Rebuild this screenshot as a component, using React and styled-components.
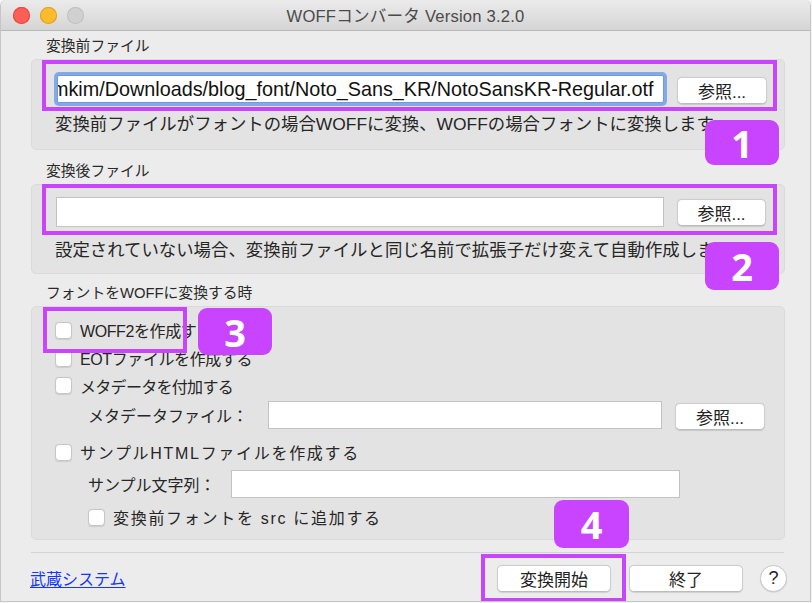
import React from 'react';
import styled, { createGlobalStyle } from 'styled-components';

const GlobalStyle = createGlobalStyle`
  html, body {
    margin: 0;
    padding: 0;
    background: #f6f6f6;
  }
  body {
    font-family: "Liberation Sans", "Noto Sans CJK JP", sans-serif;
    color: #262626;
  }
`

const ACCENT = '#c944ff'

export const WindowCss = styled.div`
  position: relative;
  width: 809px;
  height: 601px;
  background: #ececec;
  border: 1px solid #c6c6c6;
  border-top: none;
  border-radius: 6px 6px 0 0;
  overflow: hidden;
  display: flex;
  flex-direction: column;
`

export const TitleBarCss = styled.div`
  height: 30px;
  flex: none;
  display: grid;
  grid-template-columns: 1fr auto 1fr;
  align-items: center;
  background: linear-gradient(#ebebeb, #d5d5d5);
  border-bottom: 1px solid #b8b8b8;
`

export const LightsCss = styled.div`
  display: flex;
  gap: 10px;
  padding-left: 12px;
`

export const LightCss = styled.span`
  width: 17px;
  height: 17px;
  border-radius: 50%;
  background: ${p => p.color};
  box-shadow: inset 0 0 0 1px ${p => p.edge};
`

export const TitleCss = styled.div`
  font-size: 16.6px;
  color: #4b4b4b;
  letter-spacing: 0.2px;
`

export const BodyCss = styled.div`
  flex: 1;
  display: flex;
  flex-direction: column;
  padding: 0 25px 0 30px;
`

export const SectionLabelCss = styled.div`
  height: 26px;
  line-height: 26px;
  padding-left: 15px;
  font-size: 14.8px;
  color: #2a2a2a;
  margin-top: ${p => p.top || 0}px;
`

export const GroupCss = styled.div`
  background: #e3e3e3;
  border: 1px solid #dadada;
  border-radius: 5px;
  display: flex;
  flex-direction: column;
  padding: ${p => p.pad};
  height: ${p => p.h}px;
  box-sizing: border-box;
`

export const FileRowCss = styled.div`
  display: flex;
  align-items: center;
  height: ${p => p.h}px;
  margin-top: ${p => p.top || 0}px;
  padding-left: ${p => p.left}px;
  gap: 13px;
`

export const FieldCss = styled.div`
  width: ${p => p.w}px;
  height: ${p => p.h || 28}px;
  flex: none;
  box-sizing: border-box;
  background: #fff;
  border: 1px solid ${p => (p.focus ? '#6f9ae0' : '#c3c3c3')};
  box-shadow: ${p => (p.focus ? '0 0 0 3px #82aae8' : 'none')};
  border-radius: ${p => (p.focus ? '2px' : '0')};
  overflow: hidden;
  white-space: nowrap;
  font-size: 19.8px;
  line-height: 26px;
  color: #111;
`

export const FieldTextCss = styled.span`
  display: inline-block;
  margin-left: -6px;
`

export const ButtonCss = styled.button`
  width: ${p => p.w || 90}px;
  height: 27px;
  flex: none;
  margin-top: ${p => p.dy || 0}px;
  background: #fff;
  border: 1px solid #cdcdcd;
  border-bottom-color: #bcbcbc;
  border-radius: 5px;
  box-shadow: 0 0.5px 1px rgba(0, 0, 0, 0.12);
  font-family: "Liberation Sans", "Noto Sans CJK JP", sans-serif;
  font-size: 17px;
  color: #222;
  padding: 0;
  display: flex;
  align-items: center;
  justify-content: center;
`

export const NoteCss = styled.div`
  height: 22px;
  line-height: 22px;
  margin-top: ${p => p.top}px;
  padding-left: 23px;
  font-size: 17.4px;
  white-space: nowrap;
  overflow: hidden;
  color: #262626;
`

export const OptionRowCss = styled.div`
  display: flex;
  align-items: center;
  height: ${p => p.h || 28}px;
  margin-top: ${p => p.top || 0}px;
  padding-left: ${p => p.left || 23}px;
  font-size: 16px;
  letter-spacing: ${p => p.spacing || 0}px;
  white-space: nowrap;
`

export const CheckCss = styled.span`
  width: 17px;
  height: 17px;
  flex: none;
  box-sizing: border-box;
  background: #fff;
  border: 1px solid #c6c6c6;
  border-radius: 4px;
  box-shadow: 0 0.5px 1px rgba(0, 0, 0, 0.1);
  margin-right: 8px;
`

export const SubLabelCss = styled.span`
  width: ${p => p.w}px;
  flex: none;
  font-size: 16px;
  white-space: nowrap;
`

export const DividerCss = styled.div`
  height: 1px;
  background: #d3d3d3;
  margin-top: 12px;
  margin-right: 1px;
`

export const FooterCss = styled.div`
  display: flex;
  align-items: center;
  height: 50px;
  margin-left: -1px;
`

export const LinkCss = styled.a`
  font-size: 16px;
  color: #1437ff;
  text-decoration: underline;
  text-underline-offset: 2px;
  flex: 1;
`

export const HelpCss = styled.span`
  width: 25px;
  height: 25px;
  margin-left: 17px;
  margin-right: -2px;
  border-radius: 50%;
  background: #fff;
  border: 1px solid #c8c8c8;
  box-shadow: 0 0.5px 1px rgba(0, 0, 0, 0.15);
  display: flex;
  align-items: center;
  justify-content: center;
  font-size: 18px;
  color: #222;
`

// annotations drawn on top of the screenshot
export const HighlightCss = styled.div`
  position: absolute;
  left: ${p => p.x}px;
  top: ${p => p.y}px;
  width: ${p => p.w}px;
  height: ${p => p.h}px;
  box-sizing: border-box;
  border: 4px solid ${ACCENT};
  pointer-events: none;
`

export const BadgeCss = styled.div`
  position: absolute;
  left: ${p => p.x}px;
  top: ${p => p.y}px;
  width: ${p => p.w}px;
  height: ${p => p.h}px;
  border-radius: 9px;
  background: ${ACCENT};
  color: #fff;
  font-family: "Noto Sans", "Liberation Sans", sans-serif;
  font-weight: 700;
  font-size: 38px;
  display: flex;
  align-items: center;
  justify-content: center;
`

const FileGroup = ({ focus, value, note, pad, h, left, rowH, noteTop, btnDy, fieldW, fieldH, btnW }) => (
  <GroupCss pad={pad} h={h}>
    <FileRowCss h={rowH} left={left}>
      <FieldCss w={fieldW} h={fieldH} focus={focus}>
        {value && <FieldTextCss>{value}</FieldTextCss>}
      </FieldCss>
      <ButtonCss w={btnW} dy={btnDy}>参照...</ButtonCss>
    </FileRowCss>
    <NoteCss top={noteTop}>{note}</NoteCss>
  </GroupCss>
)

export default () => {
  return (
    <WindowCss>
      <GlobalStyle />
      <TitleBarCss>
        <LightsCss>
          <LightCss color="#fd5f57" edge="#e2463f" />
          <LightCss color="#fdbc2e" edge="#e0a123" />
          <LightCss color="#d0d0d0" edge="#c0c0c0" />
        </LightsCss>
        <TitleCss>WOFFコンバータ Version 3.2.0</TitleCss>
        <div />
      </TitleBarCss>

      <BodyCss>
        <SectionLabelCss top={2}>変換前ファイル</SectionLabelCss>
        <FileGroup
          focus
          value="mkim/Downloads/blog_font/Noto_Sans_KR/NotoSansKR-Regular.otf"
          note="変換前ファイルがフォントの場合WOFFに変換、WOFFの場合フォントに変換します。"
          pad="10px 0 0 0"
          h={91}
          left={25}
          rowH={38}
          fieldW={607}
          btnW={90}
          btnDy={3}
          noteTop={5}
        />

        <SectionLabelCss top={8}>変換後ファイル</SectionLabelCss>
        <FileGroup
          note="設定されていない場合、変換前ファイルと同じ名前で拡張子だけ変えて自動作成します。"
          pad="12px 0 0 0"
          h={90}
          left={24}
          rowH={30}
          fieldW={608}
          fieldH={30}
          btnW={89}
          btnDy={0}
          noteTop={12}
        />

        <SectionLabelCss top={6}>フォントをWOFFに変換する時</SectionLabelCss>
        <GroupCss pad="9px 0 0 0" h={234}>
          <OptionRowCss spacing={-0.4}><CheckCss />WOFF2を作成する</OptionRowCss>
          <OptionRowCss spacing={-0.4}><CheckCss />EOTファイルを作成する</OptionRowCss>
          <OptionRowCss h={27} spacing={-0.7}><CheckCss />メタデータを付加する</OptionRowCss>
          <FileRowCss h={32} left={56}>
            <SubLabelCss w={167}>メタデータファイル：</SubLabelCss>
            <FieldCss w={394} h={28} />
            <ButtonCss w={90} dy={2}>参照...</ButtonCss>
          </FileRowCss>
          <OptionRowCss top={7} spacing={1.7}><CheckCss />サンプルHTMLファイルを作成する</OptionRowCss>
          <FileRowCss h={28} left={56} top={4}>
            <SubLabelCss w={130}>サンプル文字列：</SubLabelCss>
            <FieldCss w={449} h={28} />
          </FileRowCss>
          <OptionRowCss top={5} left={56} spacing={1.7}><CheckCss />変換前フォントを src に追加する</OptionRowCss>
        </GroupCss>

        <DividerCss />
        <FooterCss>
          <LinkCss href="#">武蔵システム</LinkCss>
          <ButtonCss w={114}>変換開始</ButtonCss>
          <ButtonCss w={114} style={{ marginLeft: 18 }}>終了</ButtonCss>
          <HelpCss>?</HelpCss>
        </FooterCss>
      </BodyCss>

      <HighlightCss x={41} y={60} w={735} h={51} />
      <BadgeCss x={704} y={120} w={74} h={45}>1</BadgeCss>
      <HighlightCss x={41} y={184} w={735} h={51} />
      <BadgeCss x={704} y={242} w={74} h={48}>2</BadgeCss>
      <HighlightCss x={42} y={307} w={144} h={46} />
      <BadgeCss x={197} y={308} w={74} h={47}>3</BadgeCss>
      <BadgeCss x={553} y={500} w={75} h={48}>4</BadgeCss>
      <HighlightCss x={480} y={554} w={145} h={48} />
    </WindowCss>
  );
}
